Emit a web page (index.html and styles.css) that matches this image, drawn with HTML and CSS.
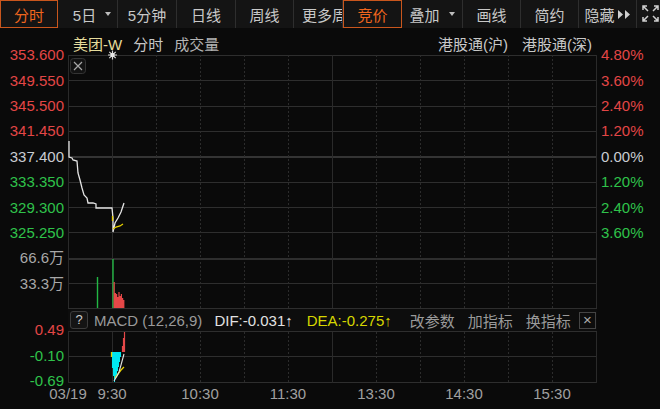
FILE: index.html
```html
<!DOCTYPE html>
<html>
<head>
<meta charset="utf-8">
<title>美团-W 分时</title>
<link rel="stylesheet" href="styles.css">
</head>
<body>

<div class="toolbar">
  <div class="tab w58 active">分时</div>
  <div class="tab w60 shift">5日<i class="caret"></i></div>
  <div class="tab">5分钟</div>
  <div class="tab">日线</div>
  <div class="tab w58">周线</div>
  <div class="tab more">更多周期</div>
  <div class="tab active">竞价</div>
  <div class="tab w61">叠加<i class="caret"></i></div>
  <div class="tab w58">画线</div>
  <div class="tab w58">简约</div>
  <div class="tab w58">隐藏<svg class="ff" width="13" height="9" viewBox="0 0 13 9"><path d="M0 0L5 4.5L0 9ZM7 0L12 4.5L7 9Z"/></svg></div>
  <div class="fullscreen">
    <svg width="17" height="17" viewBox="0 0 17 17">
      <path d="M1 5V1H5M1 1L6 6M12 1H16V5M16 1L11 6M1 12V16H5M1 16L6 11M16 12V16H12M16 16L11 11"/>
    </svg>
  </div>
</div>

<div class="chart">
  <div class="title">
    <span class="stock">美团-W</span>
    <span>分时</span>
    <span class="dim">成交量</span>
    <span class="push">港股通(沪)</span>
    <span>港股通(深)</span>
  </div>

  <!-- price -->
  <div class="axis left price-l">
    <div class="lbl up">353.600</div>
    <div class="lbl up">349.550</div>
    <div class="lbl up">345.500</div>
    <div class="lbl up">341.450</div>
    <div class="lbl flat">337.400</div>
    <div class="lbl down">333.350</div>
    <div class="lbl down">329.300</div>
    <div class="lbl down">325.250</div>
  </div>
  <svg class="plot price" width="529" height="203" viewBox="0 0 529 203">
    <path class="hline" d="M0 0.5H529M0 25.5H529M0 51.5H529M0 76.5H529M0 127.5H529M0 152.5H529M0 177.5H529"/>
    <path class="hline thick" d="M0 102H529"/>
    <path class="vline" d="M0.5 0V203M44.5 0V203M264.5 0V203M528.5 0V203"/>
    <path class="vline dot" d="M88.5 0V203M132.5 0V203M176.5 0V203M220.5 0V203M308.5 0V203M352.5 0V203M396.5 0V203M440.5 0V203M484.5 0V203"/>
    <rect class="xbox" x="2.5" y="3.5" width="15" height="15" rx="3"/>
    <path class="xmark" d="M6 7L14 15M14 7L6 15"/>
    <path class="star" d="M44.5 -4.5V4.5M40 0H49M41.3 -3.2L47.7 3.2M47.7 -3.2L41.3 3.2"/>
    <circle class="star-c" cx="44.5" cy="0" r="2.2"/>
    <path class="price-line" d="M1 86L1 102L4 103L5 105L9 106L10 118L12 125L14 133L16 140L19 143L20 148L25 148L28 149L28 153L44 153L45 163L45 177L47 168L50 163L53 157L56 148"/>
    <path class="avg-line" d="M44.5 161V166M45 174L48 172L52 171L55 169"/>
  </svg>
  <div class="axis right price-r">
    <div class="lbl up">4.80%</div>
    <div class="lbl up">3.60%</div>
    <div class="lbl up">2.40%</div>
    <div class="lbl up">1.20%</div>
    <div class="lbl flat">0.00%</div>
    <div class="lbl down">1.20%</div>
    <div class="lbl down">2.40%</div>
    <div class="lbl down">3.60%</div>
  </div>

  <!-- volume -->
  <div class="axis left vol-l">
    <div class="lbl grey">66.6万</div>
    <div class="lbl grey">33.3万</div>
  </div>
  <svg class="plot vol" width="529" height="50" viewBox="0 0 529 50">
    <path class="hline mid" d="M0 1H529"/>
    <path class="hline" d="M0 25.5H529"/>
    <path class="vline" d="M0.5 0V50M44.5 0V50M264.5 0V50M528.5 0V50"/>
    <path class="vline dot" d="M88.5 0V50M132.5 0V50M176.5 0V50M220.5 0V50M308.5 0V50M352.5 0V50M396.5 0V50M440.5 0V50M484.5 0V50"/>
    <path class="bar-g" d="M29.5 19V50M45 1V50"/>
    <path class="bar-r" d="M46.2 24V50M47.4 35V50M48.6 36V50M49.8 39V50M51 34V50M52.2 38V50M53.4 36V50M54.6 40V50M55.8 42V50"/>
  </svg>

  <!-- macd toolbar -->
  <div class="macd-bar">
    <span class="help">?</span>
    <span class="name">MACD (12,26,9)</span>
    <span class="dif">DIF:-0.031↑</span>
    <span class="dea">DEA:-0.275↑</span>
    <span class="act first">改参数</span>
    <span class="act">加指标</span>
    <span class="act">换指标</span>
    <span class="close">×</span>
  </div>

  <div class="axis left macd-l">
    <div class="lbl up">0.49</div>
    <div class="lbl down">-0.10</div>
    <div class="lbl down">-0.69</div>
  </div>
  <svg class="plot macd" width="529" height="51" viewBox="0 0 529 51">
    <path class="hline" d="M0 24.5H529M0 50.5H529"/>
    <path class="vline" d="M0.5 0V51M44.5 0V51M264.5 0V51M528.5 0V51"/>
    <path class="vline dot" d="M88.5 0V51M132.5 0V51M176.5 0V51M220.5 0V51M308.5 0V51M352.5 0V51M396.5 0V51M440.5 0V51M484.5 0V51"/>
    <path class="bar-c" d="M43.5 20V24M44.5 20V36M45.5 20V44M46.5 20V50M47.5 20V47M48.5 20V43M49.5 20V39M50.5 20V35M51.5 20V30M52.5 20V25"/>
    <path class="bar-r" d="M54.5 20V14M55.5 20V6M56.5 20V0"/>
    <path class="avg-line" d="M43.5 20V25M47 46L50 42L53 38L56 35"/>
    <path class="dif-line" d="M46 49L49 44L51 40L53 33L56 22"/>
  </svg>

  <div class="times">
    <span class="tick">03/19</span>
    <span class="tick">9:30</span>
    <span class="tick skip">10:30</span>
    <span class="tick skip">11:30</span>
    <span class="tick skip">13:30</span>
    <span class="tick skip">14:30</span>
    <span class="tick skip">15:30</span>
  </div>
</div>

</body>
</html>
```

FILE: styles.css
```css
body { margin: 0; width: 660px; height: 409px; overflow: hidden;
  background: #0a0a0a; color: #bbb;
  font: 15px "Liberation Sans", "Noto Sans CJK SC", sans-serif; }

/* top tab strip */
.toolbar { display: flex; width: 660px; height: 28px; background: #141414; }
.tab { box-sizing: border-box; flex: 0 0 59px; height: 28px;
  display: flex; align-items: center; justify-content: center;
  border-right: 1px solid #2e2e2e; color: #c8c8c8;
  white-space: nowrap; overflow: hidden; }
.w58 { flex-basis: 58px; }
.w60 { flex-basis: 60px; }
.w61 { flex-basis: 61px; }
.shift { padding-left: 9px; }
.tab.more { flex-basis: 49px; justify-content: flex-start; padding-left: 8px; }
.tab.active { border: 1px solid #c9561d; color: #f0661e; }
.caret { display: inline-block; margin-left: 9px;
  border-left: 3.5px solid transparent; border-right: 3.5px solid transparent;
  border-top: 4px solid #bdbdbd; }
.ff { margin-left: 3px; fill: #cfcfcf; }

.fullscreen { flex: 0 0 23px; box-sizing: border-box; height: 28px;
  padding: 5px 0 0 5px; overflow: hidden; }
.fullscreen svg { display: block; fill: none; stroke: #cfcfcf; stroke-width: 1.5; }

/* chart frame */
.chart { display: grid;
  grid-template-columns: 68px 529px 63px;
  grid-template-rows: 27px 203px 50px 24px 51px 26px;
  grid-template-areas:
    ".    title  ."
    "pl   price  pr"
    "vl   vol    ."
    ".    bar    ."
    "ml   macd   ."
    "time time   time"; }

.title { grid-area: title; display: flex; align-items: center; gap: 11px;
  padding: 3px 5px 0; color: #c8c8c8; white-space: nowrap; }
.title .stock { color: #e6dc9c; }
.title .dim { color: #b4b4b4; }
.title .push { margin-left: auto; margin-right: 3px; }

.axis { display: flex; flex-direction: column; }
.axis .lbl { height: 25.4px; line-height: 25.4px; white-space: nowrap; }
.axis.left .lbl { text-align: right; padding-right: 4px; }
.axis.right .lbl { padding-left: 4px; }
.price-l { grid-area: pl; margin-top: -12.7px; }
.price-r { grid-area: pr; margin-top: -12.7px; }
.vol-l { grid-area: vl; margin-top: -12.7px; }
.macd-l { grid-area: ml; margin-top: -14.8px; }
.macd-l .lbl { height: 25.6px; line-height: 25.6px; }

.up { color: #e34646; }
.down { color: #2fc24a; }
.flat { color: #c9ccd2; }
.grey { color: #a8a8a8; }

.plot { display: block; overflow: visible; }
.price { grid-area: price; }
.vol { grid-area: vol; }
.macd { grid-area: macd; }

.hline { stroke: #2e2e2e; stroke-width: 1; fill: none; }
.hline.thick { stroke: #343434; stroke-width: 2; }
.hline.mid { stroke: #2e2e2e; stroke-width: 2; }
.vline { stroke: #2a2a2a; stroke-width: 1; fill: none; }
.vline.dot { stroke: #2c2c2c; stroke-dasharray: 2 2; }

.xbox { fill: #131313; stroke: #343434; }
.xmark { stroke: #a8a8a8; stroke-width: 1.2; }
.star { stroke: #d8d8d8; stroke-width: 1.2; }
.star-c { fill: #e6e6e6; }

.price-line { fill: none; stroke: #e4e4e4; stroke-width: 1.3; }
.avg-line { fill: none; stroke: #e8d200; stroke-width: 1.3; }
.dif-line { fill: none; stroke: #e4e4e4; stroke-width: 1.1; }
.bar-g { stroke: #22b744; stroke-width: 1.4; }
.bar-r { stroke: #e54848; stroke-width: 1.2; }
.bar-c { stroke: #00e8f0; stroke-width: 1.05; }

/* MACD indicator strip */
.macd-bar { grid-area: bar; box-sizing: border-box; display: flex; align-items: center;
  padding-left: 2px; background: #0d0d0d;
  border-top: 1px solid #2e2e2e; border-bottom: 1px solid #2e2e2e;
  white-space: nowrap; }
.help { box-sizing: border-box; width: 18px; height: 18px; border: 1px solid #3c3c3c;
  border-radius: 3px; background: #141414; color: #cfcfcf;
  font-size: 13px; line-height: 16px; text-align: center; }
.name { margin-left: 6px; color: #9a9a9a; }
.dif { margin-left: 12px; color: #e2e2e2; }
.dea { margin-left: 14px; color: #d6d600; }
.act { margin-left: 13px; color: #9a9a9a; }
.act.first { margin-left: 18px; }
.close { box-sizing: border-box; width: 17px; height: 17px; margin-left: 8px;
  border: 1px solid #444; color: #aaa; font-size: 15px; line-height: 14px; text-align: center; }

/* time axis */
.times { grid-area: time; display: flex; padding-left: 46px; }
.tick { flex: 0 0 44px; display: flex; justify-content: center;
  line-height: 22px; color: #a0a0a0; white-space: nowrap; }
.tick.skip { margin-left: 44px; }
```
